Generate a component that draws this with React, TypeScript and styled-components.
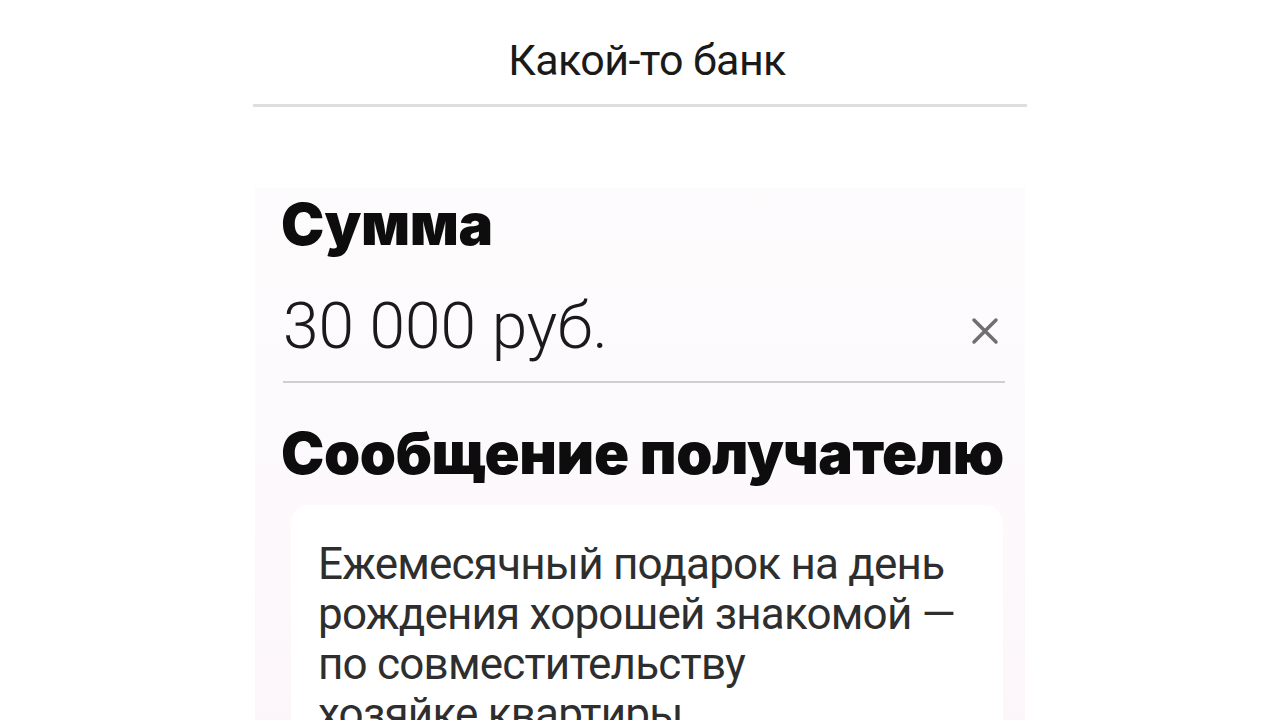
import React from "react"
import styled, { createGlobalStyle } from "styled-components"

const GlobalStyle = createGlobalStyle`
  html, body {
    margin: 0;
    padding: 0;
    background: #ffffff;
    overflow: hidden;
  }
`

const Screen = styled.div`
  width: 774px;
  margin: 0 auto;
  font-family: Roboto, "Liberation Sans", sans-serif;
  color: #111;
`

const Header = styled.header`
  height: 107px;
  display: flex;
  align-items: center;
  justify-content: center;
  border-bottom: 3px solid #dedede;
  font-size: 43px;
  font-weight: 400;
  letter-spacing: -0.6px;
  color: #1a1a1a;
  padding: 16px 0 0 14px;
  box-sizing: border-box;
`

const Panel = styled.main`
  margin: 81px 2px 0;
  padding: 4px 20px 40px 26px;
  background: linear-gradient(180deg, #fdfcfd 0%, #fcf5fb 100%);
  min-height: 600px;
`

const Title = styled.h2`
  margin: 0;
  font-family: Inter, "Liberation Sans", sans-serif;
  font-weight: 900;
  font-size: 58px;
  letter-spacing: -0.4px;
  line-height: 64px;
  color: #0d0d0d;
`

const AmountRow = styled.div`
  display: flex;
  align-items: center;
  justify-content: space-between;
  height: 88px;
  margin: 26px 0 0 2px;
  border-bottom: 2px solid #cfcfcf;
  padding-bottom: 11px;
`

const Amount = styled.span`
  font-weight: 300;
  font-size: 64px;
  letter-spacing: 0;
  color: #1a1a1a;
`

const ClearButton = styled.button`
  border: none;
  background: none;
  padding: 0;
  margin: 10px 6px 0 0;
  width: 28px;
  height: 28px;
  display: flex;
  cursor: pointer;
`

const MessageTitle = styled(Title)`
  margin-top: 38px;
`

const MessageBox = styled.div`
  margin: 20px 2px 0 10px;
  background: #ffffff;
  border-radius: 18px;
  padding: 34px 30px 30px 27px;
  font-size: 44px;
  line-height: 50px;
  font-weight: 400;
  letter-spacing: -0.8px;
  color: #2e2e2e;
`

export default function App() {
  return (
    <>
      <GlobalStyle />
      <Screen>
        <Header>Какой-то банк</Header>
        <Panel>
          <Title>Сумма</Title>
          <AmountRow>
            <Amount>30 000 руб.</Amount>
            <ClearButton aria-label="Очистить">
              <svg width="28" height="28" viewBox="0 0 28 28">
                <path
                  d="M3 3 L25 25 M25 3 L3 25"
                  stroke="#6f6f6f"
                  strokeWidth="3.5"
                  strokeLinecap="round"
                />
              </svg>
            </ClearButton>
          </AmountRow>
          <MessageTitle>Сообщение получателю</MessageTitle>
          <MessageBox>
            Ежемесячный подарок на день
            <br />
            рождения хорошей знакомой —
            <br />
            по совместительству
            <br />
            хозяйке квартиры
          </MessageBox>
        </Panel>
      </Screen>
    </>
  )
}
